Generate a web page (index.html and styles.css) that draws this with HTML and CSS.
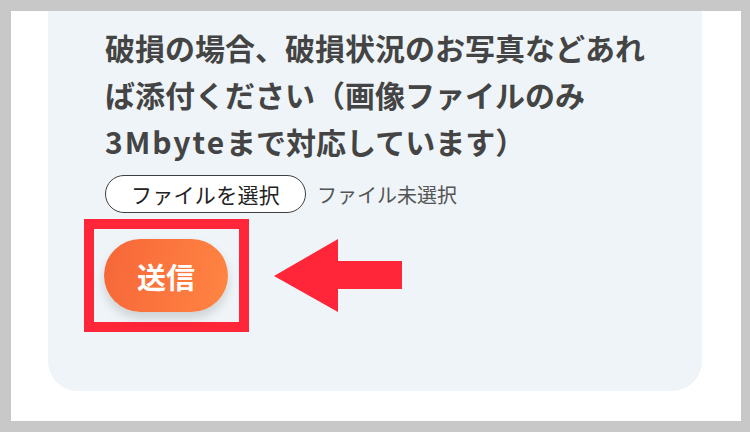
FILE: index.html
```html
<!DOCTYPE html>
<html lang="ja">
<head>
<meta charset="utf-8">
<link rel="stylesheet" href="styles.css">
</head>
<body>
<div class="frame">
  <div class="card">
    <p class="note">破損の場合、破損状況のお写真などあれ<br>ば添付ください（画像ファイルのみ<br><span class="latin">3Mbyte</span>まで対応しています）</p>
    <div class="file-row">
      <span class="file-btn">ファイルを選択</span>
      <span class="file-label">ファイル未選択</span>
    </div>
    <div class="submit-row">
      <div class="highlight">
        <button class="submit" type="button">送信</button>
      </div>
      <svg class="arrow" width="128" height="73" viewBox="0 0 128 73" aria-hidden="true">
        <polygon points="0,37 64,0 64,22 128,22 128,50 64,50 64,73" fill="#ff2639"/>
      </svg>
    </div>
  </div>
</div>
</body>
</html>
```
FILE: styles.css
```css
html, body {
  margin: 0;
  padding: 0;
}
body {
  background: #c8c8c8;
  width: 750px;
  height: 432px;
  overflow: hidden;
  font-family: "Noto Sans CJK JP", "Noto Sans", sans-serif;
}
.frame {
  margin: 11px 9px 0 11px;
  height: 410px;
  background: #ffffff;
  padding: 0 39px 0 37px;
  box-sizing: border-box;
}
.card {
  height: 380px;
  background: #eef4f7;
  border-radius: 0 0 30px 30px;
  padding: 13px 20px 0 57px;
  box-sizing: border-box;
}
.note {
  margin: 0;
  font-size: 30px;
  line-height: 47px;
  font-weight: 700;
  color: #444444;
  white-space: nowrap;
}
.latin {
  letter-spacing: 2px;
}
.file-row {
  display: flex;
  align-items: center;
  gap: 11px;
  margin-top: 10px;
}
.file-btn {
  box-sizing: border-box;
  width: 201px;
  height: 38px;
  border: 1.5px solid #3f3f3f;
  border-radius: 19px;
  background: #ffffff;
  display: flex;
  align-items: center;
  justify-content: center;
  font-size: 21px;
  color: #222222;
  letter-spacing: 0.3px;
}
.file-label {
  font-size: 20px;
  color: #555555;
}
.submit-row {
  display: flex;
  align-items: center;
  gap: 25px;
  margin-top: 6px;
  margin-left: -21px;
}
.highlight {
  border: 10px solid #ff2639;
  padding: 10px 11px 10px 10px;
  width: 124px;
  height: 73px;
  box-sizing: content-box;
}
.submit {
  width: 124px;
  height: 73px;
  border: none;
  border-radius: 37px;
  background: linear-gradient(100deg, #f76639 0%, #ff8542 100%);
  box-shadow: 0 6px 10px rgba(60, 60, 60, 0.18);
  color: #ffffff;
  font-family: "Noto Sans CJK JP", "Noto Sans", sans-serif;
  font-size: 29px;
  font-weight: 700;
  padding: 0;
  display: block;
}
.arrow {
  display: block;
}
```
